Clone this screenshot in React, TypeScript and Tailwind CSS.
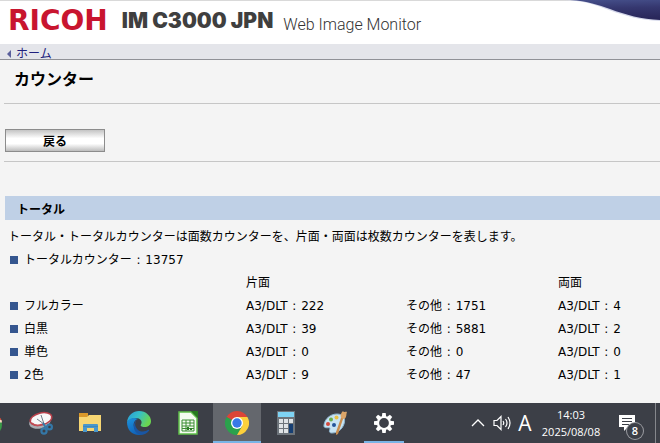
import React from 'react';

interface CounterRow {
  label: string;
  single: number;
  other: number;
  duplex: number;
}

const rows: CounterRow[] = [
  { label: 'フルカラー', single: 222, other: 1751, duplex: 4 },
  { label: '白黒', single: 39, other: 5881, duplex: 2 },
  { label: '単色', single: 0, other: 0, duplex: 0 },
  { label: '2色', single: 9, other: 47, duplex: 1 },
];

const Bullet = () => <span className="inline-block w-2 h-2 mr-1.5 bg-[#35568f] shrink-0" />;

const Count = ({ label, value }: { label: string; value: number }) => (
  <>
    {label} <span className="mx-px">:</span> {value}
  </>
);

const HeaderWave = () => (
  <svg className="absolute -top-px right-0" width="96" height="22" viewBox="0 0 96 22" aria-hidden="true">
    <defs>
      <linearGradient id="wave" x1="0" y1="0" x2="0.1" y2="1">
        <stop offset="0" stopColor="#454f8a" />
        <stop offset="0.45" stopColor="#35376f" />
        <stop offset="1" stopColor="#29275a" />
      </linearGradient>
    </defs>
    <path d="M0 0C22 1 32 5 45 10C61 16 76 20 96 21V0Z" fill="#d5d8ea" />
    <path d="M6 0C24 1 34 5 46 9C62 15 77 19 96 20V0Z" fill="url(#wave)" />
  </svg>
);

const PageHeader = () => (
  <header className="relative h-11 flex items-center bg-white border-t border-[#d9d9d9] pl-2">
    <span className="font-['DejaVu_Sans',sans-serif] text-[28px] leading-8 font-bold text-[#c8152f] -mt-1">RICOH</span>
    <h1 className="ml-3.5 font-[Inter,sans-serif] text-[21px] leading-8 font-black text-[#3f3f3f] -mt-1 whitespace-nowrap">
      IM C3000 JPN
    </h1>
    <span className="ml-2.5 mt-1 font-[Roboto,sans-serif] text-[16px] leading-6 font-light text-[#333] whitespace-nowrap">
      Web Image Monitor
    </span>
    <HeaderWave />
  </header>
);

const CounterTable = () => (
  <table className="w-full table-fixed text-left">
    <thead>
      <tr className="h-[23px]">
        <th className="w-[236px]" />
        <th className="w-40 font-normal">片面</th>
        <th className="w-[152px]" />
        <th className="font-normal">両面</th>
      </tr>
    </thead>
    <tbody>
      {rows.map((row) => (
        <tr key={row.label} className="h-[23px]">
          <th className="font-normal"><Bullet />{row.label}</th>
          <td><Count label="A3/DLT" value={row.single} /></td>
          <td><Count label="その他" value={row.other} /></td>
          <td><Count label="A3/DLT" value={row.duplex} /></td>
        </tr>
      ))}
    </tbody>
  </table>
);

const LauncherIcon = () => (
  <svg className="shrink-0" width="24" height="24" viewBox="0 0 24 24">
    <circle cx="12" cy="14" r="10" fill="#3a9b48" />
    <path d="M3 8A11 11 0 0 1 21 8L22 11H3Z" fill="#d9503f" />
    <path d="M15 9h6.500l.5 2.500H15z" fill="#f1d9c4" />
  </svg>
);

const SnipIcon = () => (
  <svg width="26" height="26" viewBox="0 0 26 26">
    <ellipse cx="12" cy="12" rx="11" ry="6.500" transform="rotate(-14 12 12)" fill="#a9adb3" />
    <ellipse cx="13" cy="9" rx="11" ry="6" transform="rotate(-14 13 9)" fill="#f7f7f8" stroke="#b8404b" strokeWidth="1.500" />
    <path d="M4 13c3 3 7 3 10 1" stroke="#c24d55" strokeWidth="1.500" fill="none" />
    <path d="M13 5l3 9M9 9l7 5" stroke="#6f7c89" />
    <circle cx="16" cy="21" r="2.600" fill="none" stroke="#3478a8" strokeWidth="2.200" />
    <circle cx="21.500" cy="17" r="2.400" fill="none" stroke="#3478a8" strokeWidth="2.200" />
    <path d="M15 13l3 5" stroke="#3478a8" strokeWidth="2" />
  </svg>
);

const FolderIcon = () => (
  <svg width="24" height="22" viewBox="0 0 24 22">
    <path d="M1 1h9v5H1z" fill="#d9982a" />
    <path d="M1 5h8l2-2h12v16H1z" fill="#f7d673" />
    <path d="M5 20v-7q0-1 1-1h13q1 0 1 1v7h-4v-4H9v4z" fill="#4a97cb" />
    <path d="M5 14h15v1H5z" fill="#3579ac" opacity=".5" />
  </svg>
);

const EdgeIcon = () => (
  <svg width="26" height="26" viewBox="0 0 26 26">
    <defs>
      <linearGradient id="edgeTop" x1="0" y1="0" x2="1" y2=".4">
        <stop offset="0" stopColor="#2a9ad8" />
        <stop offset=".5" stopColor="#35bfc9" />
        <stop offset="1" stopColor="#6bd650" />
      </linearGradient>
      <linearGradient id="edgeSide" x1="0" y1="0" x2=".6" y2="1">
        <stop offset="0" stopColor="#1c93dc" />
        <stop offset="1" stopColor="#0f5db5" />
      </linearGradient>
    </defs>
    <path d="M1 12C2 5 7 1 13 1c7 0 12 5 12 10 0 4-3 6-6.500 6-3 0-4.500-1-3.500-2.500C17 11 14 8 10 8c-4 0-7 2-9 4z" fill="url(#edgeTop)" />
    <path d="M1 12c2-4 7-5 11-3-4 1-5 5-4 8 2 5 8 7 14 3-2 3-5 5-9 5C6 25 1 20 1 12z" fill="url(#edgeSide)" />
    <path d="M11 10c-3 3-2 7 1 10 3 2 7 2 10 0 1-.6 1.500 0 1 .7C19 26 11 26 8.500 20 7 16 8 12 11 10z" fill="#1a56a3" />
  </svg>
);

const SpreadsheetIcon = () => (
  <svg width="22" height="26" viewBox="0 0 22 26">
    <path d="M2 2h12l6 6v16H2z" fill="#f4fbf1" stroke="#5fc04a" strokeWidth="1.500" />
    <path d="M14 1h7v7z" fill="#257a1e" />
    <path d="M5 10h12v11H5zM5 13h12M5 16h12M5 18.500h12M9 10v11M13 10v6" fill="none" stroke="#3b8d32" />
    <path d="M10 17h2v3h-2zM13 18h2v2h-2z" fill="#2e7d27" />
  </svg>
);

const ChromeIcon = () => (
  <svg width="24" height="24" viewBox="0 0 24 24">
    <path d="M12 12L1.600 6A12 12 0 0 1 22.400 6Z" fill="#dc4437" />
    <path d="M12 12L1.600 6A12 12 0 0 0 12 24L17.200 15Z" fill="#2ba24c" />
    <path d="M12 6h10.400A12 12 0 0 1 12 24L17.200 15Z" fill="#fdd03b" />
    <circle cx="12" cy="12" r="6" fill="#fff" />
    <circle cx="12" cy="12" r="4.700" fill="#3879e8" />
  </svg>
);

const CalculatorIcon = () => (
  <svg width="18" height="24" viewBox="0 0 18 24">
    <path d="M0 0h18v24H0z" fill="#6d747b" />
    <path d="M1 1h16v5H1z" fill="#7ed3f4" />
    <path d="M2 8h4v4H2zM7 8h4v4H7zM12 8h4v4h-4zM2 13h4v4H2zM7 13h4v4H7zM2 18h4v4H2zM7 18h4v4H7z" fill="#dfe3e6" />
    <path d="M12 13h4v9h-4z" fill="#173f73" />
  </svg>
);

const PaintIcon = () => (
  <svg width="26" height="26" viewBox="0 0 26 26">
    <path d="M2 15C3 8 9 4 15 4c6 0 9 4 7 10-2 6-7 9-12 9-3 0-3-2-2-4 1-3-7 1-6-4z" fill="#c7e3f3" stroke="#8eb6cf" />
    <circle cx="6" cy="14" r="2" fill="#d2493c" />
    <circle cx="9" cy="9.500" r="2" fill="#6cae49" />
    <circle cx="14.500" cy="7.500" r="2" fill="#eac246" />
    <circle cx="12" cy="15" r="2" fill="#24549a" />
    <path d="M22 6l-6 18-2 1v-3l6-17z" fill="#c98d4e" />
    <path d="M19 8c-1-3 0-5 2-7 1 2 3 0 4 1-1 2 0 6-3 7z" fill="#dba569" />
  </svg>
);

const GearIcon = () => (
  <svg width="20" height="20" viewBox="1 1 18 18">
    {[0, 45, 90, 135, 180, 225, 270, 315].map((deg) => (
      <path key={deg} d="M8 4.500L8.500 1h3L12 4.500z" fill="#fff" transform={`rotate(${deg} 10 10)`} />
    ))}
    <circle cx="10" cy="10" r="5.400" fill="none" stroke="#fff" strokeWidth="2" />
  </svg>
);

const apps = [
  { name: 'Snipping Tool', icon: <SnipIcon /> },
  { name: 'エクスプローラー', icon: <FolderIcon /> },
  { name: 'Microsoft Edge', icon: <EdgeIcon /> },
  { name: 'LibreOffice Calc', icon: <SpreadsheetIcon /> },
  { name: 'Google Chrome', icon: <ChromeIcon />, state: 'active' },
  { name: '電卓', icon: <CalculatorIcon /> },
  { name: 'ペイント', icon: <PaintIcon /> },
  { name: '設定', icon: <GearIcon />, state: 'running' },
];

const Taskbar = () => (
  <footer className="h-10 flex items-stretch bg-[#3c3f47] text-white font-['Open_Sans','Noto_Sans',sans-serif] overflow-hidden">
    <button aria-label="ランチャー" className="w-4 shrink-0 flex items-center justify-end pr-3">
      <LauncherIcon />
    </button>
    <nav className="flex gap-px pl-px">
      {apps.map((app) => (
        <button
          key={app.name}
          aria-label={app.name}
          className={`w-12 flex flex-col items-center ${app.state === 'active' ? 'bg-[#64676d]' : ''}`}
        >
          <span className="flex-1 flex items-center pt-0.5">{app.icon}</span>
          <span
            className={`h-0.5 ${app.state === 'active' ? 'w-full bg-[#79b4e6]' : ''} ${app.state === 'running' ? 'w-10 bg-[#79b4e6]' : ''}`}
          />
        </button>
      ))}
    </nav>
    <div className="ml-auto flex items-center pr-1">
      <button aria-label="隠れているインジケーター" className="mr-2">
        <svg width="14" height="10" viewBox="0 0 14 10" fill="none" stroke="#fff" strokeWidth="1.300">
          <path d="M1 8l6-6 6 6" />
        </svg>
      </button>
      <button aria-label="音量" className="mr-1.5">
        <svg width="18" height="16" viewBox="0 0 18 16" fill="none" stroke="#fff" strokeWidth="1.200">
          <path d="M1 5.500h3l4-4v13l-4-4H1z" />
          <path d="M10 6q1.500 2 0 4M12.500 4q3 4 0 8M15 2q4 6 0 12" />
        </svg>
      </button>
      <button className="w-4 mr-1.5 text-[21px] leading-6">A</button>
      <div className="w-16 mr-4 text-center text-[11px] leading-[17px]">
        <div>14:03</div>
        <div>2025/08/08</div>
      </div>
      <button aria-label="通知" className="relative w-6 h-6 mr-3">
        <svg width="17" height="17" viewBox="0 0 17 17">
          <path d="M0 0h16v12H9l-4 4v-4H0z" fill="#fff" />
          <path d="M3 3.500h10M3 6.500h10M3 9.500h7" stroke="#3c3f47" />
        </svg>
        <span className="absolute right-0 -bottom-1 w-4 h-4 rounded-full bg-[#3c3f47] ring-1 ring-[#9a9ca1] text-[11px] leading-4 font-semibold text-center">
          8
        </span>
      </button>
      <span className="w-px h-10 bg-[#85878c]" />
    </div>
  </footer>
);

export default function App() {
  return (
    <div className="min-h-screen flex flex-col bg-[#f4f4f4] text-black text-[12px] leading-[18px] font-['DejaVu_Sans','Noto_Sans_CJK_JP',sans-serif]">
      <PageHeader />
      <nav className="h-4 flex items-center bg-[#e4e5ea] border-b border-[#909197] pl-[7px]">
        <svg width="4" height="8" viewBox="0 0 4 8" className="mt-1" aria-hidden="true">
          <path d="M4 0v8L0 4z" fill="#5a5f9c" />
        </svg>
        <a href="#" className="ml-[5px] mt-1 text-[#1f1f7d]">ホーム</a>
      </nav>
      <main className="flex-1 pl-1">
        <h2 className="pl-2.5 pt-2 pb-[11px] text-[16px] leading-6 font-bold border-b border-[#c6c6c6]">カウンター</h2>
        <div className="pl-px pt-[25px] pb-[9px] border-b border-[#c6c6c6]">
          <button className="block w-[100px] h-[23px] pt-0.5 border border-[#8c8c8c] bg-[linear-gradient(to_bottom,#c4c4c4,#ffffff_40%,#ffffff_65%,#bdbdbd)] font-bold">
            戻る
          </button>
        </div>
        <section className="pl-px pt-[34px]">
          <h3 className="h-6 flex items-center pt-1 pl-3 bg-[#bfd0e6] font-bold">トータル</h3>
          <p className="h-[28px] pl-[3px] pt-2">トータル・トータルカウンターは面数カウンターを、片面・両面は枚数カウンターを表します。</p>
          <div className="pl-[5px]">
            <p className="h-[23px] flex items-center">
              <Bullet />
              <span><Count label="トータルカウンター" value={13757} /></span>
            </p>
            <CounterTable />
          </div>
        </section>
      </main>
      <Taskbar />
    </div>
  );
}
